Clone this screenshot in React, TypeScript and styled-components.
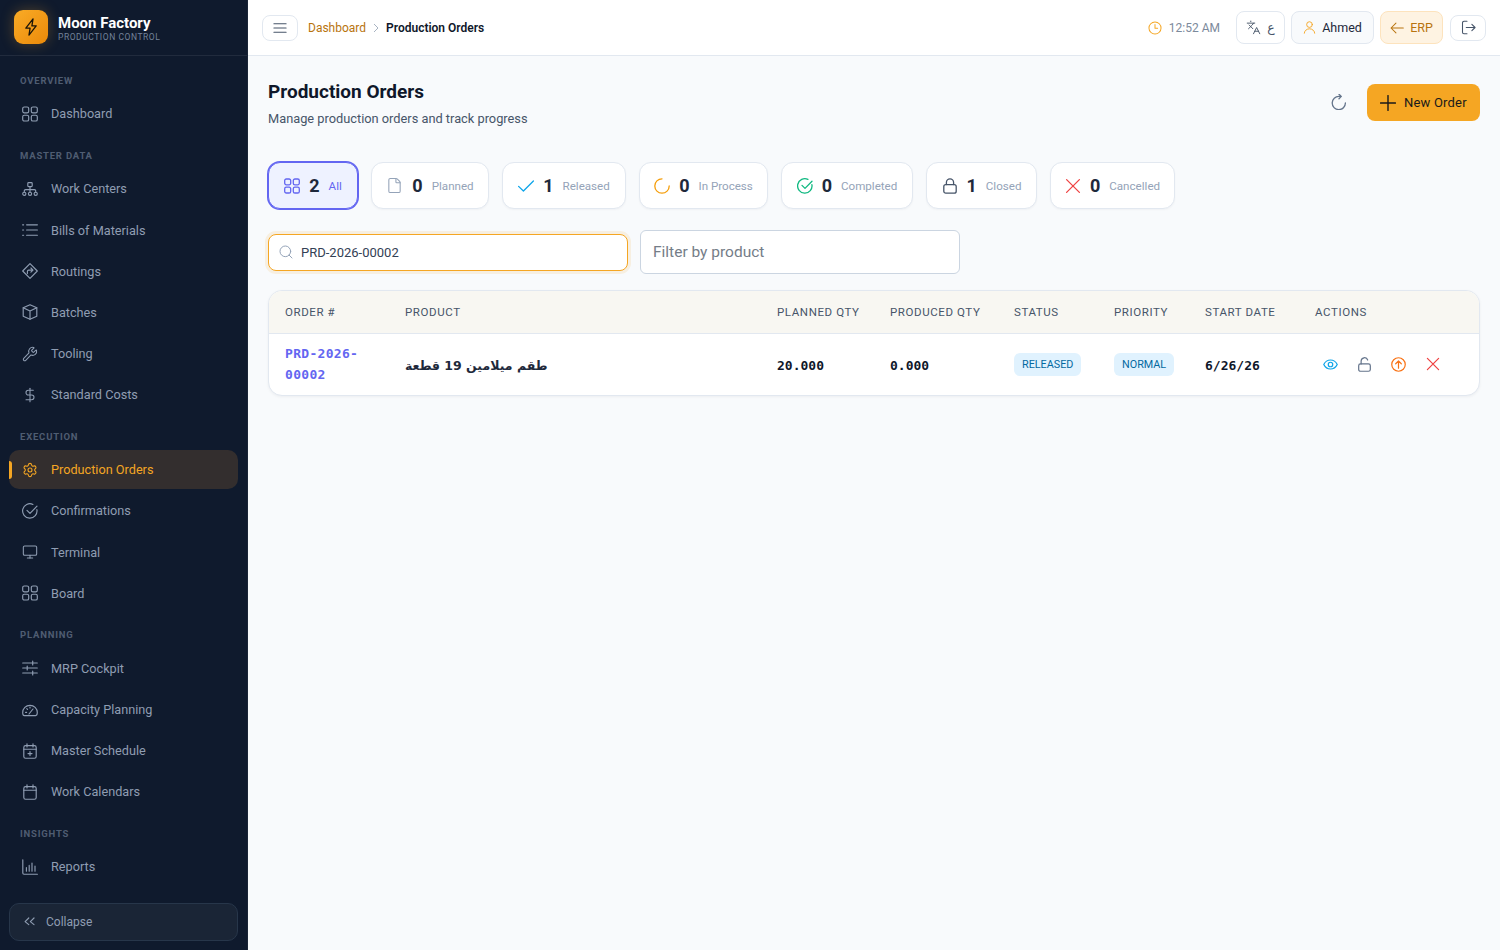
import React from "react";
import styled, { createGlobalStyle } from "styled-components";
import { File, Languages, Monitor, Search, Settings, Wrench, DollarSign } from "lucide-react";

const Global = createGlobalStyle`
  * { box-sizing: border-box; }
  html, body { margin: 0; padding: 0; height: 100%; }
  body { font-family: Roboto, "DejaVu Sans", sans-serif; background: #f8fafc; color: #0f172a; overflow: hidden; }
`;

const paths: Record<string, React.ReactNode> = {
  grid: (<><rect x=".7" y="1" width="6" height="5.8" rx="1.6" /><rect x="9.3" y="1" width="6" height="5.8" rx="1.6" /><rect x=".7" y="9.2" width="6" height="5.8" rx="1.6" /><rect x="9.3" y="9.2" width="6" height="5.8" rx="1.6" /></>),
  sitemap: (<><rect x="5.8" y="1.6" width="4.4" height="4" rx=".8" /><path d="M8 5.6V11M2.3 11V9.9a1.3 1.3 0 0 1 1.3-1.3h8.8a1.3 1.3 0 0 1 1.3 1.3V11" /><circle cx="2.3" cy="12.8" r="1.6" /><circle cx="8" cy="12.8" r="1.6" /><circle cx="13.7" cy="12.8" r="1.6" /></>),
  list: <path d="M4.6 2.8H15.4M4.6 8H15.4M4.6 13.2H15.4M.6 2.8H1.6M.6 8H1.6M.6 13.2H1.6" />,
  directions: (<><path d="M8 .7 15.3 8 8 15.3.7 8Z" /><path d="M5.4 10.6V8.4a1.3 1.3 0 0 1 1.3-1.3h4M8.9 5l2.1 2.1-2.1 2.1" /></>),
  box: (<><path d="M8 .8l6.8 3V12.2L8 15.2 1.2 12.2V3.8Z" /><path d="M1.2 3.8 8 7l6.8-3.2M8 7v8.2" /></>),
  circleCheck: (<><path d="M14.9 6.6A7.2 7.2 0 1 1 10.9 1.4" /><path d="M5 7.4 8 10.4 15 3.2" /></>),
  sliders: <path d="M.7 3H15.3M.7 8H15.3M.7 13H15.3M10.7 1V5M5.2 6V10M10.7 11V15" />,
  gauge: (<><path d="M2.4 13.6C1.2 13.6.7 12.6.7 10.6a7.3 7.3 0 0 1 14.6 0c0 2-.5 3-1.7 3Z" /><path d="M7 12 11 7M3.6 10.4H4.6M8 5V6M4.8 6.6 5.5 7.3" /></>),
  calPlus: (<><rect x="1.8" y="2.6" width="12.4" height="12.6" rx="1.8" /><path d="M5 .7V4M11 .7V4M1.8 6.2H14.2M8 8.6V12.6M6 10.6H10" /></>),
  cal: (<><rect x="1.8" y="2.6" width="12.4" height="12.6" rx="1.8" /><path d="M5 .7V4M11 .7V4M1.8 6.2H14.2" /></>),
  chart: <path d="M.8.8V14a1.2 1.2 0 0 0 1.2 1.2H15.4M4.4 12.2V8.6M7.2 12.2V6.4M10 12.2V4M13 12.2V7" />,
  angles: <path d="M6.6 3.4 2.4 7.6l4.2 3.4M12.6 3.4 8.4 7.6l4.2 3.4" />,
  bolt: <path d="M9.8.8 3.4 9H7.2L6.2 15.2 12.6 7H8.8Z" />,
  bars: <path d="M1 3.2H15M1 8H15M1 12.8H15" />,
  user: (<><circle cx="8" cy="4.4" r="3.5" /><path d="M1.6 15a6.4 5.4 0 0 1 12.8 0" /></>),
  arrowLeft: <path d="M15.2 8H1.2M6.8 2.4 1.2 8l5.6 5.6" />,
  signOut: <path d="M6.4 1.4H3.2A1.6 1.6 0 0 0 1.6 3v10a1.6 1.6 0 0 0 1.6 1.6h3.2M5.6 8H15M11.6 4.6 15 8l-3.4 3.4" />,
  clock: (<><circle cx="8" cy="8" r="6.9" /><path d="M8 4V8.4H11" /></>),
  refresh: <path d="M14.4 9A6.6 6.6 0 1 1 8 2.4H10.2M8 .2 10.3 2.4 8 4.7" />,
  plus: <path d="M8 .6V15.4M.6 8H15.4" />,
  check: <path d="M.6 8.4 5.4 13 15.4 3" />,
  spinner: <path d="M8 .8A7.2 7.2 0 1 0 15.2 8" />,
  lock: (<><rect x="1.8" y="6.6" width="12.4" height="8.6" rx="2" /><path d="M4.4 6.6V4.4a3.6 3.6 0 0 1 7.2 0v2.2" /></>),
  unlock: (<><rect x="1.8" y="7.4" width="12.4" height="7.8" rx="2" /><path d="M4.4 7.4V4.4A3.6 3.6 0 0 1 11.4 3.2" /></>),
  times: <path d="M1.6 1.6 14.4 14.4M14.4 1.6 1.6 14.4" />,
  eye: (<><path d="M.8 8C2.4 4.8 5 3.2 8 3.2s5.6 1.6 7.2 4.8c-1.6 3.2-4.2 4.8-7.2 4.8S2.4 11.2.8 8Z" /><circle cx="8" cy="8" r="2.4" /></>),
  arrowCircleUp: (<><circle cx="8" cy="8" r="7.2" /><path d="M8 12V4.4M5 7.2 8 4.2l3 3" /></>),
};

const Svg = styled.svg<{ $size?: number; $color?: string; $weight?: number }>`
  width: ${(p) => p.$size ?? 16}px;
  height: ${(p) => p.$size ?? 16}px;
  flex: none;
  fill: none;
  stroke: ${(p) => p.$color ?? "currentColor"};
  stroke-width: ${(p) => p.$weight ?? 1.15};
  stroke-linecap: round;
  stroke-linejoin: round;
`;

const Icon = ({ name, size, color, weight }: { name: string; size?: number; color?: string; weight?: number }) => (
  <Svg viewBox="0 0 16 16" $size={size} $color={color} $weight={weight}>{paths[name]}</Svg>
);

const Shell = styled.div`
  display: flex;
  width: 1500px;
  height: 950px;
  overflow: hidden;
`;

const Sidebar = styled.aside`
  width: 248px;
  flex: none;
  height: 100%;
  background: #0f1a2d;
  display: flex;
  flex-direction: column;
  border-right: 1px solid #1a2537;
`;

const Brand = styled.div`
  height: 56px;
  flex: none;
  display: flex;
  align-items: center;
  gap: 10px;
  padding: 0 14px 1px;
  border-bottom: 1px solid rgba(255, 255, 255, 0.08);
`;

const Logo = styled.div`
  width: 34px;
  height: 34px;
  border-radius: 9px;
  background: linear-gradient(135deg, #f9ab26, #eb8a0a);
  box-shadow: 0 0 14px rgba(245, 166, 35, 0.28);
  display: flex;
  align-items: center;
  justify-content: center;
  color: #1a1408;
`;

const BrandText = styled.div`
  display: flex;
  flex-direction: column;
  margin-top: 2px;
`;

const BrandName = styled.div`
  font-size: 15px;
  line-height: 17px;
  font-weight: 700;
  color: #ffffff;
`;

const BrandSub = styled.div`
  font-size: 8.5px;
  line-height: 10px;
  letter-spacing: 0.55px;
  color: #74839a;
`;

const Nav = styled.nav`
  flex: 1;
  padding: 18px 9px 0;
  display: flex;
  flex-direction: column;
  gap: 15.5px;
  overflow: hidden;
`;

const Group = styled.div`
  display: flex;
  flex-direction: column;
  gap: 2px;
`;

const GroupLabel = styled.div`
  font-size: 9.5px;
  line-height: 14px;
  font-weight: 700;
  letter-spacing: 0.8px;
  color: #4f5d72;
  padding-left: 11px;
  margin-bottom: 4.3px;
`;

const Item = styled.a<{ $active?: boolean }>`
  position: relative;
  height: 39.2px;
  display: flex;
  align-items: center;
  gap: 13px;
  padding-left: 13px;
  border-radius: 10px;
  font-size: 12.7px;
  color: ${(p) => (p.$active ? "#f5a623" : "#8f9db2")};
  background: ${(p) => (p.$active ? "#332e2e" : "transparent")};
`;

const ActiveBar = styled.span`
  position: absolute;
  left: 0;
  top: 11px;
  width: 3px;
  height: 18px;
  border-radius: 0 3px 3px 0;
  background: #f5a623;
`;

const SideFoot = styled.div`
  flex: none;
  padding: 0 9px 9px;
`;

const Collapse = styled.button`
  width: 100%;
  height: 38px;
  display: flex;
  align-items: center;
  gap: 9px;
  padding: 0 13px;
  border-radius: 10px;
  border: 1px solid #27364a;
  background: #1a2536;
  color: #8f9db2;
  font: inherit;
  font-size: 12px;
`;

const Column = styled.div`
  flex: 1;
  min-width: 0;
  display: flex;
  flex-direction: column;
`;

const Topbar = styled.header`
  height: 56px;
  flex: none;
  background: #ffffff;
  border-bottom: 1px solid #e2e8f0;
  display: flex;
  align-items: center;
  padding: 0 14px;
`;

const GhostButton = styled.button<{ $w: number }>`
  width: ${(p) => p.$w}px;
  height: 26px;
  display: flex;
  align-items: center;
  justify-content: center;
  background: #ffffff;
  border: 1px solid #e2e8f0;
  border-radius: 8px;
  padding: 0;
  color: #475569;
`;

const LogoutButton = styled(GhostButton)`
  margin-left: 1px;
`;

const Crumbs = styled.div`
  display: flex;
  align-items: center;
  gap: 6px;
  margin-left: 10px;
  font-size: 12px;
`;

const CrumbLink = styled.span`
  color: #b8740f;
`;

const CrumbChevron = styled.svg`
  width: 8px;
  height: 10px;
  fill: none;
  stroke: #a8b3c2;
  stroke-width: 1;
`;

const CrumbNow = styled.span`
  font-weight: 600;
  color: #0f172a;
`;

const TopRight = styled.div`
  margin-left: auto;
  display: flex;
  align-items: center;
  gap: 6px;
`;

const TimeBox = styled.div`
  display: flex;
  align-items: center;
  gap: 7px;
  margin-right: 10px;
  font-size: 12px;
  color: #7c8a9c;
`;

const Chip = styled.button<{ $bg: string; $line: string; $ink: string; $w: number }>`
  width: ${(p) => p.$w}px;
  height: 33px;
  display: flex;
  align-items: center;
  justify-content: center;
  gap: 6px;
  padding: 0;
  font: inherit;
  font-size: 12.5px;
  border-radius: 8px;
  background: ${(p) => p.$bg};
  border: 1px solid ${(p) => p.$line};
  color: ${(p) => p.$ink};
`;

const Main = styled.main`
  flex: 1;
  padding: 25px 20px 0;
  background: #f8fafc;
`;

const PageHead = styled.div`
  display: flex;
  align-items: center;
  justify-content: space-between;
  margin-bottom: 34px;
`;

const PageTitle = styled.h1`
  margin: 0 0 7px;
  font-size: 19px;
  line-height: 22px;
  font-weight: 700;
  color: #0f172a;
`;

const PageSub = styled.p`
  margin: 0;
  font-size: 12.8px;
  line-height: 18px;
  color: #475569;
`;

const HeadActions = styled.div`
  display: flex;
  align-items: center;
  gap: 20px;
  margin-bottom: 4px;
`;

const RefreshButton = styled.span`
  display: flex;
  margin-bottom: 2px;
  color: #64748b;
`;

const PrimaryButton = styled.button`
  height: 37px;
  width: 113px;
  display: flex;
  align-items: center;
  gap: 8px;
  padding: 0 13px;
  border: none;
  border-radius: 8px;
  background: #f5a623;
  color: #1a1a1a;
  font: inherit;
  font-size: 13px;
  letter-spacing: 0.2px;
`;

const StatRow = styled.div`
  display: flex;
  gap: 13px;
`;

const Stat = styled.div<{ $active?: boolean; $w: number }>`
  width: ${(p) => p.$w}px;
  height: 47px;
  display: flex;
  align-items: center;
  justify-content: center;
  gap: 9px;
  border-radius: 12px;
  border: 1px solid ${(p) => (p.$active ? "#6366f1" : "#e2e8f0")};
  background: ${(p) => (p.$active ? "#eef2ff" : "#ffffff")};
  box-shadow: ${(p) => (p.$active ? "0 0 0 1px #6366f1" : "0 1px 2px rgba(15,23,42,.04)")};
`;

const StatValue = styled.span`
  font-size: 18px;
  font-weight: 700;
  color: #1e293b;
`;

const StatLabel = styled.span<{ $active?: boolean }>`
  font-size: 11.6px;
  color: ${(p) => (p.$active ? "#6366f1" : "#94a3b8")};
`;

const Filters = styled.div`
  display: flex;
  align-items: center;
  gap: 12px;
  margin: 21px 0 16px;
`;

const SearchBox = styled.div`
  width: 360px;
  height: 37px;
  display: flex;
  align-items: center;
  gap: 7px;
  padding: 0 8px 0 9px;
  background: #ffffff;
  border: 1px solid #f5a623;
  border-radius: 8px;
  box-shadow: 0 0 0 3px rgba(245, 166, 35, 0.12);
  color: #94a3b8;
  font-size: 13px;
`;

const SearchValue = styled.span`
  color: #334155;
`;

const ProductFilter = styled.div`
  width: 320px;
  height: 44px;
  display: flex;
  align-items: center;
  padding: 0 12px;
  background: #ffffff;
  border: 1px solid #cbd5e1;
  border-radius: 6px;
  font-size: 15.5px;
  color: #757d88;
`;

const TableCard = styled.div`
  width: 1212px;
  background: #ffffff;
  border: 1px solid #e2e8f0;
  border-radius: 14px;
  overflow: hidden;
  box-shadow: 0 1px 3px rgba(15, 23, 42, 0.05);
`;

const Table = styled.table`
  width: 100%;
  border-collapse: collapse;
  table-layout: fixed;
`;

const Col = styled.col<{ $w: number }>`
  width: ${(p) => p.$w}px;
`;

const Th = styled.th`
  height: 42px;
  padding: 0 16px;
  text-align: left;
  background: #f8f7f2;
  border-bottom: 1px solid #e2e8f0;
  font-size: 11.5px;
  font-weight: 400;
  letter-spacing: 0.6px;
  color: #475569;
  white-space: nowrap;
`;

const Td = styled.td`
  height: 62px;
  padding: 0 16px;
  vertical-align: middle;
`;

const OrderLink = styled.a`
  display: block;
  font-family: "DejaVu Sans Mono", monospace;
  font-size: 13px;
  line-height: 21px;
  letter-spacing: 0.3px;
  font-weight: 700;
  color: #6366f1;
`;

const ProductName = styled.span`
  font-family: "DejaVu Sans", sans-serif;
  font-size: 12.5px;
  font-weight: 700;
  color: #1e293b;
`;

const MonoValue = styled.span`
  font-family: "DejaVu Sans Mono", monospace;
  font-size: 13px;
  font-weight: 700;
  color: #0f172a;
`;

const Badge = styled.span`
  display: inline-flex;
  align-items: center;
  vertical-align: middle;
  height: 23px;
  padding: 0 8px;
  border-radius: 6px;
  background: #e0f2fe;
  color: #0369a1;
  font-size: 10.8px;
`;

const Actions = styled.div`
  display: flex;
  gap: 4.3px;
`;

const ActionButton = styled.span`
  width: 30px;
  height: 30px;
  display: flex;
  align-items: center;
  justify-content: center;
`;

const nav = [
  { label: "OVERVIEW", items: [["grid", "Dashboard"]] },
  { label: "MASTER DATA", items: [["sitemap", "Work Centers"], ["list", "Bills of Materials"], ["directions", "Routings"], ["box", "Batches"], ["wrench", "Tooling"], ["dollar", "Standard Costs"]] },
  { label: "EXECUTION", items: [["gear", "Production Orders"], ["circleCheck", "Confirmations"], ["monitor", "Terminal"], ["grid", "Board"]] },
  { label: "PLANNING", items: [["sliders", "MRP Cockpit"], ["gauge", "Capacity Planning"], ["calPlus", "Master Schedule"], ["cal", "Work Calendars"]] },
  { label: "INSIGHTS", items: [["chart", "Reports"]] },
];

const NavIcon = ({ name }: { name: string }) => {
  if (name === "wrench") return <Wrench size={16} strokeWidth={1.6} />;
  if (name === "dollar") return <DollarSign size={16} strokeWidth={1.6} />;
  if (name === "gear") return <Settings size={16} strokeWidth={1.6} />;
  if (name === "monitor") return <Monitor size={16} strokeWidth={1.6} />;
  return <Icon name={name} />;
};

const stats = [
  { icon: "grid", color: "#6366f1", value: 2, label: "All", w: 90, active: true },
  { icon: "file", color: "#94a3b8", value: 0, label: "Planned", w: 118 },
  { icon: "check", color: "#0ea5e9", value: 1, label: "Released", w: 124 },
  { icon: "spinner", color: "#f59e0b", value: 0, label: "In Process", w: 129 },
  { icon: "circleCheck", color: "#10b981", value: 0, label: "Completed", w: 132 },
  { icon: "lock", color: "#475569", value: 1, label: "Closed", w: 111 },
  { icon: "times", color: "#ef4444", value: 0, label: "Cancelled", w: 125 },
];

const columns: [string, number][] = [["ORDER #", 120], ["PRODUCT", 372], ["PLANNED QTY", 113], ["PRODUCED QTY", 124], ["STATUS", 100], ["PRIORITY", 91], ["START DATE", 110], ["ACTIONS", 180]];

export default function App() {
  return (
    <Shell>
      <Global />
      <Sidebar>
        <Brand>
          <Logo><Icon name="bolt" size={18} /></Logo>
          <BrandText>
            <BrandName>Moon Factory</BrandName>
            <BrandSub>PRODUCTION CONTROL</BrandSub>
          </BrandText>
        </Brand>
        <Nav>
          {nav.map((g) => (
            <Group key={g.label}>
              <GroupLabel>{g.label}</GroupLabel>
              {g.items.map(([icon, text]) => {
                const active = text === "Production Orders";
                return (
                  <Item key={text} $active={active}>
                    {active && <ActiveBar />}
                    <NavIcon name={icon} />
                    {text}
                  </Item>
                );
              })}
            </Group>
          ))}
        </Nav>
        <SideFoot>
          <Collapse><Icon name="angles" size={14} weight={1.3} /> Collapse</Collapse>
        </SideFoot>
      </Sidebar>
      <Column>
        <Topbar>
          <GhostButton $w={36}><Icon name="bars" size={14} /></GhostButton>
          <Crumbs>
            <CrumbLink>Dashboard</CrumbLink>
            <CrumbChevron viewBox="0 0 8 10"><path d="M2 1l4 4-4 4" /></CrumbChevron>
            <CrumbNow>Production Orders</CrumbNow>
          </Crumbs>
          <TopRight>
            <TimeBox><Icon name="clock" size={14} color="#f5a623" /> 12:52 AM</TimeBox>
            <Chip $w={49} $bg="#ffffff" $line="#e2e8f0" $ink="#475569"><Languages size={15} strokeWidth={1.5} /> ع</Chip>
            <Chip $w={83} $bg="#f8fafc" $line="#e2e8f0" $ink="#1e293b"><Icon name="user" size={13} color="#f5a623" /> Ahmed</Chip>
            <Chip $w={63} $bg="#fef3e2" $line="#fde3bd" $ink="#b8740f"><Icon name="arrowLeft" size={14} /> ERP</Chip>
            <LogoutButton $w={36}><Icon name="signOut" size={15} /></LogoutButton>
          </TopRight>
        </Topbar>
        <Main>
          <PageHead>
            <div>
              <PageTitle>Production Orders</PageTitle>
              <PageSub>Manage production orders and track progress</PageSub>
            </div>
            <HeadActions>
              <RefreshButton><Icon name="refresh" weight={1.3} /></RefreshButton>
              <PrimaryButton><Icon name="plus" size={16} weight={1.4} /> New Order</PrimaryButton>
            </HeadActions>
          </PageHead>
          <StatRow>
            {stats.map((s) => (
              <Stat key={s.label} $active={s.active} $w={s.w}>
                {s.icon === "file" ? <File size={17} strokeWidth={1.5} color={s.color} /> : <Icon name={s.icon} size={16} color={s.color} weight={1.3} />}
                <StatValue>{s.value}</StatValue>
                <StatLabel $active={s.active}>{s.label}</StatLabel>
              </Stat>
            ))}
          </StatRow>
          <Filters>
            <SearchBox>
              <Search size={16} strokeWidth={1.5} />
              <SearchValue>PRD-2026-00002</SearchValue>
            </SearchBox>
            <ProductFilter>Filter by product</ProductFilter>
          </Filters>
          <TableCard>
            <Table>
              <colgroup>
                {columns.map(([n, w]) => <Col key={n} $w={w} />)}
              </colgroup>
              <thead>
                <tr>{columns.map(([n]) => <Th key={n}>{n}</Th>)}</tr>
              </thead>
              <tbody>
                <tr>
                  <Td><OrderLink>PRD-2026-<br />00002</OrderLink></Td>
                  <Td><ProductName>طقم ميلامين 19 قطعة</ProductName></Td>
                  <Td><MonoValue>20.000</MonoValue></Td>
                  <Td><MonoValue>0.000</MonoValue></Td>
                  <Td><Badge>RELEASED</Badge></Td>
                  <Td><Badge>NORMAL</Badge></Td>
                  <Td><MonoValue>6/26/26</MonoValue></Td>
                  <Td>
                    <Actions>
                      <ActionButton><Icon name="eye" size={15} color="#0ea5e9" weight={1.3} /></ActionButton>
                      <ActionButton><Icon name="unlock" size={15} color="#64748b" weight={1.3} /></ActionButton>
                      <ActionButton><Icon name="arrowCircleUp" size={15} color="#f97316" weight={1.3} /></ActionButton>
                      <ActionButton><Icon name="times" size={14} color="#ef4444" weight={1.4} /></ActionButton>
                    </Actions>
                  </Td>
                </tr>
              </tbody>
            </Table>
          </TableCard>
        </Main>
      </Column>
    </Shell>
  );
}
